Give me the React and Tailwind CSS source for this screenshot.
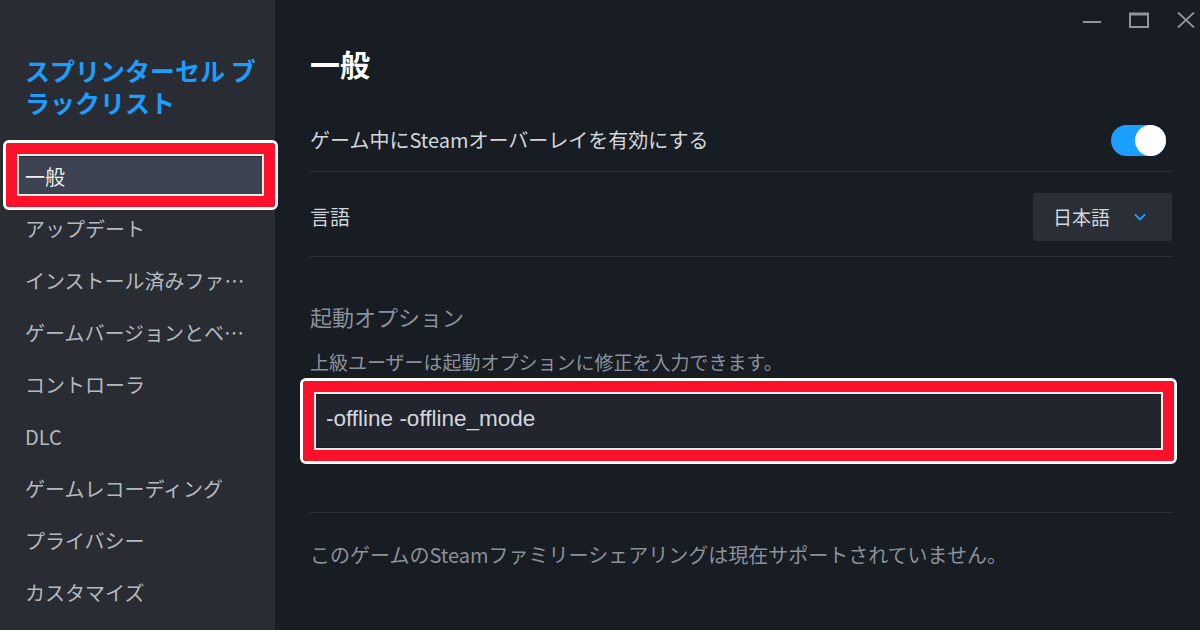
import React from 'react';

const jp = { fontFamily: '"Noto Sans CJK JP", "Liberation Sans", sans-serif' };

const menuItems = [
  '一般',
  'アップデート',
  'インストール済みファイル',
  'ゲームバージョンとベータ',
  'コントローラ',
  'DLC',
  'ゲームレコーディング',
  'プライバシー',
  'カスタマイズ',
];

// red marker frame drawn over an element (white halo, red band, thin white inner line)
const Marker = ({ className }) => (
  <div className={`pointer-events-none absolute rounded-[6px] border-[3px] border-white ${className}`}>
    <div className="h-full w-full rounded-[3px] border-[11px] border-[#fb1129]">
      <div className="h-full w-full border-2 border-[#ececec]" />
    </div>
  </div>
);

const WindowControls = () => (
  <div className="flex h-[40px] items-center justify-end gap-[27px] pr-[4px]">
    <svg width="20" height="16" viewBox="0 0 20 16">
      <line x1="1" y1="10" x2="19" y2="10" stroke="#8f959c" strokeWidth="2" />
    </svg>
    <svg width="20" height="16" viewBox="0 0 20 16">
      <rect x="1" y="1.5" width="18" height="13.5" fill="none" stroke="#8f959c" strokeWidth="2" />
      <line x1="1" y1="2.5" x2="19" y2="2.5" stroke="#8f959c" strokeWidth="2" />
    </svg>
    <svg width="20" height="16" viewBox="0 0 20 16">
      <path d="M2 0.5 L18 15.5 M18 0.5 L2 15.5" stroke="#8f959c" strokeWidth="1.8" fill="none" />
    </svg>
  </div>
);

const Sidebar = () => (
  <aside className="relative z-10 flex w-[275px] shrink-0 flex-col bg-[#292c33]" style={jp}>
    {/* game title wraps inside a narrow box */}
    <div className="ml-[25px] w-[240px] pt-[54px] text-[25px] font-bold leading-[32px] text-[#1a9fff]">
      スプリンターセル ブラックリスト
    </div>
    <nav className="ml-[18px] mr-[10px] mt-[33px] flex flex-col">
      {menuItems.map((item, i) => (
        <div key={item} className="flex h-[52px] items-center">
          {i === 0 ? (
            <div className="relative flex h-[40px] w-full items-center bg-[#3d4350] pl-[7px] text-[20px] text-[#eceef0]">
              一般
              <Marker className="-top-[17px] -bottom-[13px] -left-[15px] -right-[13px]" />
            </div>
          ) : (
            <div className="w-full truncate pl-[7px] pr-[20px] text-[20px] leading-[28px] text-[#b4b9bf]">
              {item}
            </div>
          )}
        </div>
      ))}
    </nav>
  </aside>
);

export default function App() {
  return (
    <div className="flex h-[630px] w-[1200px] overflow-hidden bg-[#181c23]" style={jp}>
      <Sidebar />
      <main className="flex flex-1 flex-col">
        <WindowControls />
        <div className="flex flex-col pl-[35px] pr-[28px]">
          <h1 className="mt-[5px] text-[30px] font-bold leading-[36px] text-white">一般</h1>

          {/* overlay toggle */}
          <div className="mt-[28px] flex h-[63px] items-center justify-between border-b border-[#2e323b]">
            <span className="text-[20px] text-[#d3d6da]">ゲーム中にSteamオーバーレイを有効にする</span>
            <div className="mr-[6px] flex h-[31px] w-[55px] items-center justify-end rounded-full bg-[#1a9fff]">
              <div className="h-[31px] w-[31px] rounded-full bg-white" />
            </div>
          </div>

          {/* language */}
          <div className="flex h-[85px] items-center justify-between border-b border-[#2e323b] pt-[6px]">
            <span className="text-[20px] text-[#d3d6da]">言語</span>
            <div className="flex h-[48px] w-[139px] items-center justify-between rounded-[3px] bg-[#2a2e37] pl-[20px] pr-[26px]">
              <span className="text-[19px] text-[#d3d6da]">日本語</span>
              <svg width="12" height="8" viewBox="0 0 12 8">
                <path d="M1 1.5 L6 6.5 L11 1.5" stroke="#1a9fff" strokeWidth="1.8" fill="none" />
              </svg>
            </div>
          </div>

          {/* launch options */}
          <div className="mt-[44px] text-[22px] leading-[30px] text-[#8b9199]">起動オプション</div>
          <div className="mt-[18px] text-[19px] leading-[26px] text-[#8b9199]">
            上級ユーザーは起動オプションに修正を入力できます。
          </div>
          <div className="relative ml-[6px] mr-[11px] mt-[20px] flex h-[52px] items-center bg-[#22252e] pb-[4px] pl-[10px]">
            <span
              className="text-[22.5px] text-[#d3d7db]"
              style={{ fontFamily: '"Liberation Sans", "Noto Sans CJK JP", sans-serif' }}
            >
              -offline -offline_mode
            </span>
            <Marker className="-inset-[17px] -left-[16px] -right-[16px]" />
          </div>

          <div className="mt-[65px] h-px bg-[#2e323b]" />
          <div className="mt-[29px] text-[20px] leading-[26px] text-[#8b9199]">
            このゲームのSteamファミリーシェアリングは現在サポートされていません。
          </div>
        </div>
      </main>
    </div>
  );
}
